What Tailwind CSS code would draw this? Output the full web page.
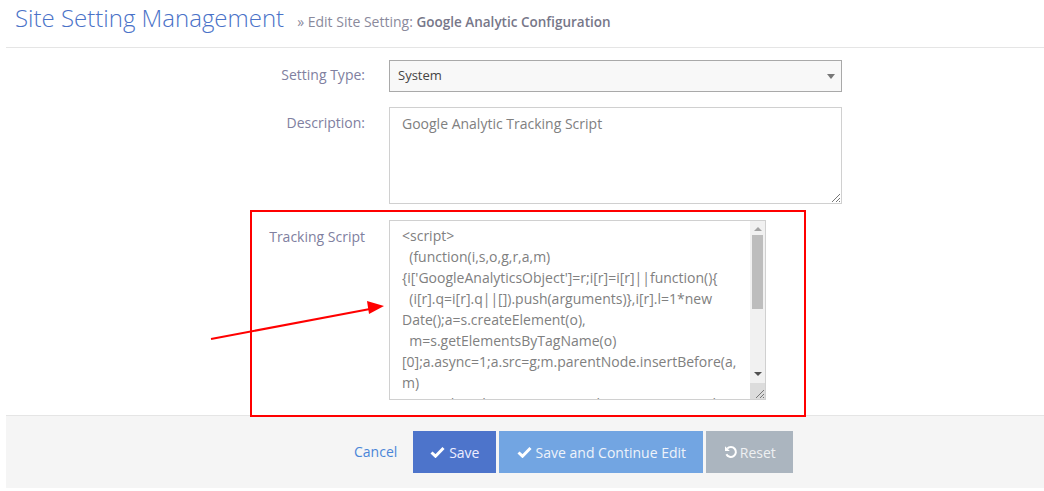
<!DOCTYPE html>
<html lang="en">
<head>
  <meta charset="UTF-8" />
  <title>Site Setting Management</title>
  <script src="https://cdn.jsdelivr.net/npm/@tailwindcss/browser@4"></script>
</head>
<body class="bg-white font-['Open_Sans',sans-serif] text-[14px] text-[#7d7d8f] h-[491px] overflow-hidden">
  <div class="relative ml-[6px] h-[491px]">
    <!-- page header -->
    <div class="h-[48px] border-b border-[#e5e5e5] pl-[9px] flex items-baseline">
      <h1 class="text-[24px] leading-[36px] font-light text-[#4a72c8]">Site Setting Management</h1>
      <span class="ml-[13px] text-[14px] text-[#8a8a9c]">» Edit Site Setting: <b class="text-[13.5px] font-semibold text-[#777789]">Google Analytic Configuration</b></span>
    </div>

    <!-- form -->
    <div class="h-[367px] pt-[12px]">
      <div class="flex h-[47px]">
        <label class="w-[359px] text-right pt-[5px] leading-[20px] text-[#8080a0]">Setting Type:</label>
        <div class="ml-[24px] w-[453px] h-[32px] border border-[#a9a9a9] bg-[#f8f8f8] flex items-center justify-between pl-[8px] pr-[6px] text-[13px] text-[#444]">
          <span>System</span>
          <span class="w-0 h-0 border-x-[4px] border-x-transparent border-t-[5px] border-t-[#777]"></span>
        </div>
      </div>
      <div class="flex h-[113px]">
        <label class="w-[359px] text-right pt-[6px] leading-[20px] text-[#8080a0]">Description:</label>
        <div class="relative ml-[24px] w-[453px] h-[97px] border border-[#d0d0d0] pl-[12px] pt-[5px] leading-[21px] text-[#808080]">
          Google Analytic Tracking Script
          <svg class="absolute right-0 bottom-0" width="11" height="11" viewBox="0 0 11 11"><path d="M2 10 10 2M6 10l4-4M9 10l1-1" stroke="#777" stroke-width="1" fill="none"/></svg>
        </div>
      </div>
      <div class="flex">
        <label class="w-[359px] text-right pt-[7px] leading-[20px] text-[#8080a0]">Tracking Script</label>
        <div class="relative ml-[24px] w-[377px] h-[180px] border border-[#d0d0d0] overflow-hidden flex">
          <div class="w-[360px] shrink-0 pl-[12px] pt-[4px] pr-[12px] leading-[21px] text-[#808080] whitespace-pre-wrap break-words">&lt;script&gt;
  (function(i,s,o,g,r,a,m)
{i['GoogleAnalyticsObject']=r;i[r]=i[r]||function(){
  (i[r].q=i[r].q||[]).push(arguments)},i[r].l=1*new
Date();a=s.createElement(o),
  m=s.getElementsByTagName(o)
[0];a.async=1;a.src=g;m.parentNode.insertBefore(a,
m)
  })(window,document,'script','https://www.google</div>
          <!-- scrollbar -->
          <div class="absolute right-0 top-0 bottom-0 w-[15px] bg-[#f1f1f1] flex flex-col items-center">
            <span class="mt-[6px] w-0 h-0 border-x-[4px] border-x-transparent border-b-[4px] border-b-[#a3a3a3]"></span>
            <span class="mt-[4px] w-[11px] h-[74px] bg-[#bdbdbd]"></span>
            <span class="mt-[63px] w-0 h-0 border-x-[4px] border-x-transparent border-t-[4px] border-t-[#505050]"></span>
            <span class="relative mt-[7px] w-[15px] flex-1 bg-[#dcdcdc]">
              <svg class="absolute right-0 bottom-0" width="11" height="11" viewBox="0 0 11 11"><path d="M2 10 10 2M6 10l4-4M9 10l1-1" stroke="#777" stroke-width="1" fill="none"/></svg>
            </span>
          </div>
        </div>
      </div>
    </div>

    <!-- footer buttons -->
    <div class="h-[73px] bg-[#f5f5f5] border-t border-[#e5e5e5] flex items-start pt-[15px] pl-[348px]">
      <a class="leading-[42px] text-[#4a86d8] mr-[16px]">Cancel</a>
      <button class="w-[83px] h-[42px] bg-[#4d74cb] text-[#eef] flex items-center justify-center gap-[4px] mr-[3px]">
        <svg width="15" height="12" viewBox="0 0 15 12"><path d="M1.5 6.5 5.5 10.2 13.5 2" stroke="#fff" stroke-width="3" fill="none"/></svg>Save
      </button>
      <button class="w-[204px] h-[42px] bg-[#72a5e2] text-[#eef3fa] flex items-center justify-center gap-[4px] mr-[3px]">
        <svg width="15" height="12" viewBox="0 0 15 12"><path d="M1.5 6.5 5.5 10.2 13.5 2" stroke="#fff" stroke-width="3" fill="none"/></svg>Save and Continue Edit
      </button>
      <button class="w-[87px] h-[42px] bg-[#abb5bf] text-[#eef0f2] flex items-center justify-center gap-[2px]">
        <svg width="14" height="14" viewBox="0 0 14 14"><path d="M3.2 3.6A5 5 0 1 1 2.4 9.2" stroke="#fff" stroke-width="2" fill="none"/><path d="M1 1.2V6H5.8Z" fill="#fff"/></svg>Reset
      </button>
    </div>

    <!-- annotation drawn over the screenshot -->
    <div class="absolute left-[244px] top-[210px] w-[556px] h-[207px] border-2 border-[#f00] pointer-events-none"></div>
    <svg class="absolute left-[-6px] top-0 pointer-events-none" width="1044" height="491">
      <path d="M211 339 370 309" stroke="#f00" stroke-width="2" fill="none"/>
      <path d="M367 301 384 306 369 314Z" fill="#f00"/>
    </svg>
  </div>
</body>
</html>
